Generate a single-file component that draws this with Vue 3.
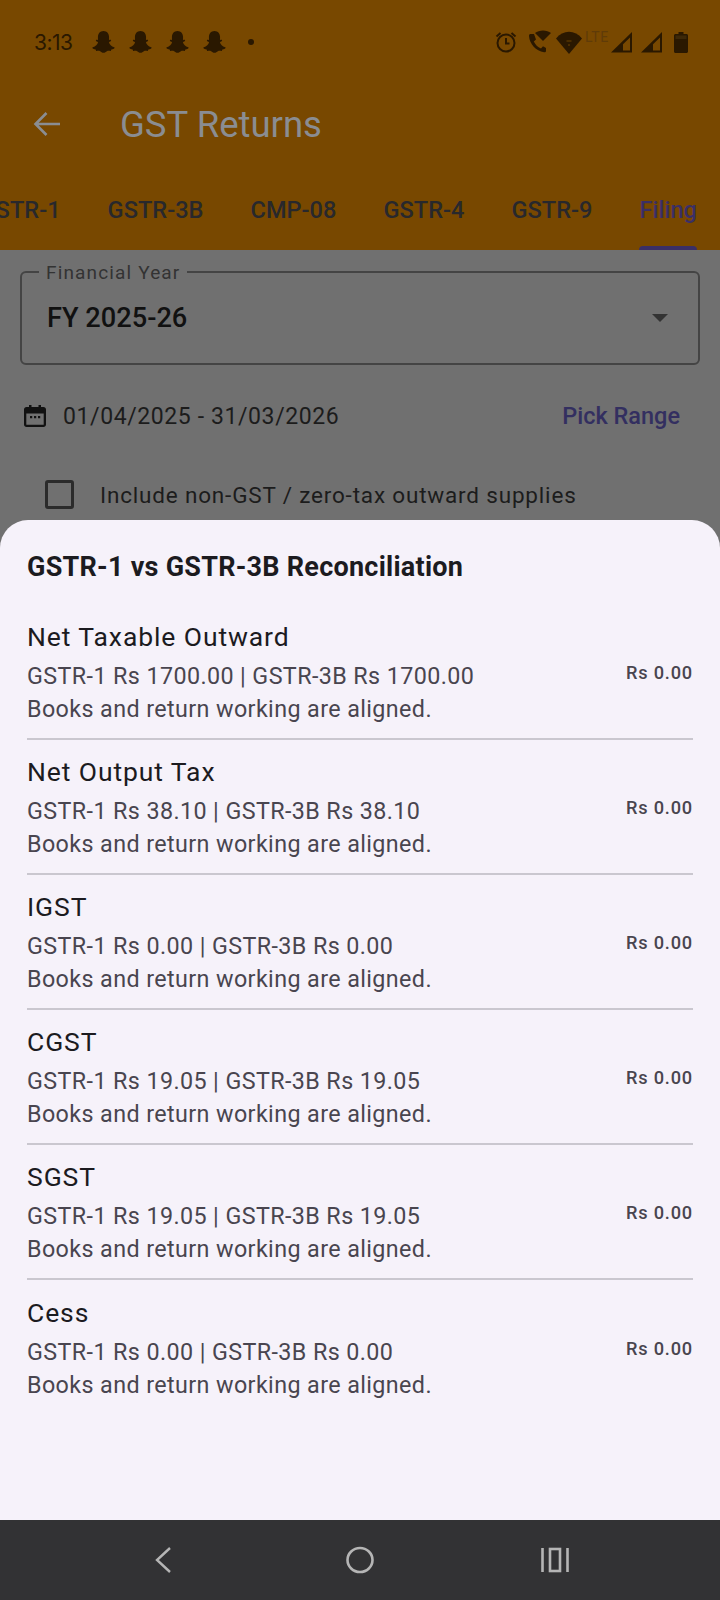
<script setup>
const tabs = ["GSTR-1", "GSTR-3B", "CMP-08", "GSTR-4", "GSTR-9", "Filing"];

const rows = [
  { name: "Net Taxable Outward", one: "1700.00", three: "1700.00" },
  { name: "Net Output Tax", one: "38.10", three: "38.10" },
  { name: "IGST", one: "0.00", three: "0.00" },
  { name: "CGST", one: "19.05", three: "19.05" },
  { name: "SGST", one: "19.05", three: "19.05" },
  { name: "Cess", one: "0.00", three: "0.00" },
];

const ghost =
  "M12 2.500c3 0 4.600 2.400 4.600 5 0 .9 0 1.600-.1 2.300.7.2 1.500-.3 1.800.3.3.7-1.300 1.300-1.800 1.600.3 1.800 2.200 3.600 4.300 4.200.7.2.5.9-.2 1.200-.7.3-1.500.4-2.100.6-.3.5-.2 1.300-.8 1.300-.8 0-1.800-.3-2.900.2-.9.5-1.600 1.300-2.800 1.300s-1.900-.8-2.800-1.300c-1.100-.5-2.100-.2-2.900-.2-.6 0-.5-.8-.8-1.300-.6-.2-1.400-.3-2.100-.6-.7-.3-.9-1-.2-1.200 2.100-.6 4-2.400 4.300-4.200-.5-.3-2.100-.9-1.800-1.600.3-.6 1.100-.1 1.800-.3-.1-.7-.1-1.400-.1-2.300 0-2.600 1.600-5 4.600-5z";

const signal = "M0 20.500 21 0v20.500zM12 18.500h7V5.500l-7 6.800z";
</script>

<template>
  <div class="screen">
    <header class="top">
      <div class="status">
        <span class="clock">3:13</span>
        <div class="ghosts">
          <svg v-for="n in 4" :key="n" class="ghost" viewBox="0 0 24 24"><path :d="ghost" /></svg>
        </div>
        <span class="dot"></span>
        <div class="status-right">
          <svg class="ico alarm" viewBox="0 0 24 24" fill="none" stroke="#2a1800" stroke-width="2">
            <circle cx="12" cy="13" r="8.500" />
            <path d="M12 8v5.500h3.500M2.500 6.500 6.500 3M21.500 6.500 17.500 3" />
          </svg>
          <svg class="ico call" viewBox="0 0 24 24">
            <path fill="#2a1800" d="M2 4h4l2 5.500-2.200 2c1.700 3.500 3.700 5.500 7.200 7l2-2.200 3 1.700v3c0 1-1 1.500-2 1.300C8 21 1.500 14 1 6c0-1 .5-2 1-2z" />
            <path fill="#2a1800" d="M7 3c4-3.500 12-3.500 16 0l-8 8z" />
          </svg>
          <svg class="ico wifi" viewBox="0 0 26 23">
            <path fill="#2a1800" d="M0 7.500C7-1.500 19-1.500 26 7.500L13 23z" />
            <path fill="#4a2d00" d="M10.500 9h5v2h-5zM12 13h2v2h-2z" />
          </svg>
          <span class="lte">LTE</span>
          <svg class="ico signal" viewBox="0 0 22 21"><path fill="#2a1800" fill-rule="evenodd" :d="signal" /></svg>
          <svg class="ico signal two" viewBox="0 0 22 21"><path fill="#2a1800" fill-rule="evenodd" :d="signal" /></svg>
          <svg class="ico battery" viewBox="0 0 14 21">
            <path fill="#2a1800" d="M4.500 0h5v2h3c.8 0 1.500.7 1.500 1.500v16c0 .8-.7 1.500-1.500 1.500h-11C.7 21 0 20.300 0 19.500v-16C0 2.700.7 2 1.500 2h3z" />
            <path fill="#3d2808" d="M1.500 3.500h11V7h-11z" />
          </svg>
        </div>
      </div>

      <div class="appbar">
        <svg class="back" viewBox="0 0 28 26" fill="none" stroke="#8a8d92" stroke-width="2.600">
          <path d="M27 13H3M13.500 2 2.500 13l11 11" />
        </svg>
        <h1>GST Returns</h1>
      </div>

      <nav class="tabs">
        <div v-for="t in tabs" :key="t" class="tab" :class="{ active: t === 'Filing' }">{{ t }}</div>
      </nav>
    </header>

    <section class="behind">
      <div class="field">
        <span class="legend">Financial Year</span>
        <span class="value">FY 2025-26</span>
        <svg class="caret" viewBox="0 0 16 8"><path d="M0 0h16L8 8z" fill="#333" /></svg>
      </div>

      <div class="range">
        <svg class="cal" viewBox="0 0 24 24">
          <path fill="#111" d="M6 1h2.500v2h7V1H18v2h2.500C21.900 3 23 4.100 23 5.500v15c0 1.400-1.100 2.500-2.500 2.500h-17C2.100 23 1 21.900 1 20.500v-15C1 4.100 2.100 3 3.500 3H6zM3.300 9.500v11c0 .2.100.3.300.3h16.800c.2 0 .3-.1.300-.3v-11z" />
          <path fill="#111" d="M7 12h2.200v2.200H7zM11 12h2.200v2.200H11zM15 12h2.200v2.200H15z" />
        </svg>
        <span class="dates">01/04/2025 - 31/03/2026</span>
        <span class="pick">Pick Range</span>
      </div>

      <div class="check-row">
        <span class="box"></span>
        <span class="check-label">Include non-GST / zero-tax outward supplies</span>
      </div>
    </section>

    <section class="sheet">
      <h2>GSTR-1 vs GSTR-3B Reconciliation</h2>
      <div v-for="(r, i) in rows" :key="r.name" class="row" :class="{ last: i === rows.length - 1 }">
        <div class="row-main">
          <div class="row-name">{{ r.name }}</div>
          <div class="row-sub first">GSTR-1 Rs {{ r.one }} | GSTR-3B Rs {{ r.three }}</div>
          <div class="row-sub">Books and return working are aligned.</div>
        </div>
        <span class="diff">Rs 0.00</span>
      </div>
    </section>

    <footer class="navbar">
      <svg class="nav-back" viewBox="0 0 20 30" fill="none" stroke="#b5b5b5" stroke-width="2.400">
        <path d="M17 3 4 15l13 12" />
      </svg>
      <svg class="nav-home" viewBox="0 0 30 30" fill="none" stroke="#b5b5b5" stroke-width="2.600">
        <ellipse cx="15" cy="15" rx="12.500" ry="12" />
      </svg>
      <svg class="nav-recent" viewBox="0 0 30 30" fill="none" stroke="#b5b5b5" stroke-width="2.600">
        <path d="M2.500 3v24M27.500 3v24" />
        <rect x="10" y="4" width="10" height="22" />
      </svg>
    </footer>
  </div>
</template>

<style>
html,
body {
  margin: 0;
  background: #707070;
}
</style>

<style scoped>
.screen {
  width: 720px;
  height: 1600px;
  display: flex;
  flex-direction: column;
  overflow: hidden;
  font-family: Roboto, "Liberation Sans", sans-serif;
  background: #707070;
}
.top {
  height: 250px;
  flex: none;
  background: #784800;
  display: flex;
  flex-direction: column;
}
.status {
  height: 84px;
  flex: none;
  box-sizing: border-box;
  padding: 0 32px 0 34px;
  display: flex;
  align-items: center;
  color: #2a1800;
}
.clock {
  font-size: 21px;
  font-family: Inter, Roboto, sans-serif;
  letter-spacing: -0.5px;
  width: 55px;
}
.ghosts {
  display: flex;
  gap: 8px;
}
.ghost {
  width: 29px;
  height: 29px;
  fill: #2a1800;
}
.dot {
  width: 6px;
  height: 6px;
  border-radius: 50%;
  background: #2a1800;
  margin-left: 19px;
}
.status-right {
  margin-left: auto;
  display: flex;
  align-items: center;
}
.ico {
  display: block;
  flex: none;
}
.alarm {
  width: 24px;
  height: 24px;
  margin-right: 10px;
}
.call {
  width: 24px;
  height: 24px;
  margin-right: 4px;
}
.wifi {
  width: 26px;
  height: 23px;
}
.lte {
  font-size: 14px;
  line-height: 13px;
  color: #5f3b08;
  align-self: flex-start;
  margin: 1px 0 0 3px;
  width: 26px;
  letter-spacing: 0.6px;
}
.signal {
  width: 22px;
  height: 21px;
  margin-right: 8px;
}
.signal.two {
  margin-right: 11px;
}
.battery {
  width: 14px;
  height: 21px;
}
.appbar {
  height: 80px;
  flex: none;
  display: flex;
  align-items: center;
  padding-left: 33px;
}
.back {
  width: 28px;
  height: 26px;
}
h1 {
  margin: 0 0 0 59px;
  font-size: 36.500px;
  font-weight: 400;
  color: #8a8d92;
}
.tabs {
  flex: 1;
  display: flex;
  justify-content: flex-end;
  gap: 47px;
  padding-right: 23px;
}
.tab {
  flex: none;
  font-size: 23.600px;
  line-height: 26px;
  font-weight: 500;
  color: #28282c;
  padding-top: 33px;
  position: relative;
}
.tab.active {
  color: #3a2f66;
}
.tab.active::after {
  content: "";
  position: absolute;
  left: 0;
  right: 0;
  bottom: 0;
  height: 4px;
  border-radius: 4px 4px 0 0;
  background: #3a2f66;
}
.behind {
  height: 270px;
  flex: none;
  box-sizing: border-box;
  padding: 21px 20px 0;
  display: flex;
  flex-direction: column;
}
.field {
  height: 94px;
  flex: none;
  box-sizing: border-box;
  border: 2px solid #444;
  border-radius: 6px;
  padding: 0 25px;
  display: flex;
  align-items: center;
  justify-content: space-between;
  position: relative;
}
.legend {
  position: absolute;
  left: 17px;
  top: -12px;
  background: #707070;
  padding: 0 7px;
  font-size: 19px;
  letter-spacing: 1.15px;
  color: #333;
}
.value {
  font-size: 27.200px;
  font-weight: 500;
  color: #111;
}
.caret {
  width: 16px;
  height: 8px;
  margin-right: 5px;
}
.range {
  display: flex;
  align-items: center;
  margin-top: 37px;
  padding: 0 20px 0 3px;
}
.cal {
  width: 24px;
  height: 24px;
}
.dates {
  margin-left: 16px;
  font-size: 23px;
  letter-spacing: 0.6px;
  color: #1c1c1c;
}
.pick {
  margin-left: auto;
  font-size: 23.500px;
  font-weight: 500;
  color: #332f60;
}
.check-row {
  display: flex;
  align-items: center;
  margin-top: 50px;
  padding-left: 25px;
}
.box {
  width: 29px;
  height: 29px;
  box-sizing: border-box;
  border: 3px solid #2b2b2b;
  border-radius: 3px;
}
.check-label {
  margin-left: 26px;
  font-size: 22.500px;
  letter-spacing: 0.82px;
  color: #1c1c1c;
}
.sheet {
  flex: 1;
  background: #f6f2fa;
  border-radius: 28px 28px 0 0;
  padding: 32px 27px 0;
}
h2 {
  margin: 0 0 23px;
  font-size: 27px;
  line-height: 30px;
  letter-spacing: 0.25px;
  font-weight: 700;
  color: #1c1b1f;
}
.row {
  display: flex;
  align-items: center;
  justify-content: space-between;
  height: 135px;
  box-sizing: border-box;
  padding-top: 2px;
  border-bottom: 2px solid #cac7cf;
}
.row.last {
  border-bottom: none;
}
.row-main {
  display: flex;
  flex-direction: column;
}
.row-name {
  font-size: 26.500px;
  line-height: 38px;
  letter-spacing: 0.9px;
  color: #1c1b1f;
}
.row-sub {
  font-size: 23.300px;
  line-height: 36px;
  letter-spacing: 0.4px;
  color: #49454f;
}
.row-sub.first {
  margin-top: 4px;
  line-height: 33px;
  margin-bottom: -2px;
}
.diff {
  font-size: 18.200px;
  font-weight: 500;
  letter-spacing: 0.8px;
  color: #49454f;
}
.navbar {
  height: 80px;
  flex: none;
  background: #323234;
  display: flex;
  align-items: center;
  padding-left: 153px;
}
.nav-back {
  width: 20px;
  height: 30px;
}
.nav-home {
  width: 30px;
  height: 30px;
  margin-left: 172px;
}
.nav-recent {
  width: 30px;
  height: 30px;
  margin-left: 165px;
}
</style>
